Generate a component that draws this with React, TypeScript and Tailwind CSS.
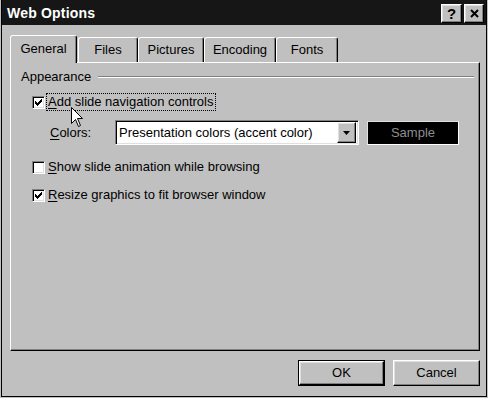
import React from "react";

const raised =
  "border-t border-l border-r border-b border-t-white border-l-white border-r-black border-b-black shadow-[inset_-1px_-1px_0_#808080,inset_1px_1px_0_#dfdfdf]";
const sunken =
  "border-t border-l border-r border-b border-t-[#808080] border-l-[#808080] border-r-white border-b-white shadow-[inset_1px_1px_0_#000,inset_-1px_-1px_0_#dfdfdf]";

function U({ c }: { c: string }) {
  return <span className="underline underline-offset-[2px] decoration-1">{c}</span>;
}

function CheckBox({ checked }: { checked: boolean }) {
  return (
    <div className={`w-[13px] h-[13px] bg-white flex items-center justify-center shrink-0 ${sunken}`}>
      {checked && (
        <svg width="7" height="7" viewBox="0 0 7 7" shapeRendering="crispEdges">
          <path
            d="M6 0h1v3h-1v1h-1v1h-1v1h-1v1h-1v-1h-1v-1h-1v-3h1v1h1v1h1v-1h1v-1h1v-1h1z"
            fill="#000"
          />
        </svg>
      )}
    </div>
  );
}

function Tab({ label, w, selected }: { label: string; w: string; selected?: boolean }) {
  return (
    <div
      className={`${w} ${
        selected ? "h-[28px] mb-[-1px] relative z-10 pb-[1px]" : "h-[25px]"
      } border-t border-l border-r border-t-white border-l-white border-r-black rounded-t-[3px] shadow-[inset_-1px_0_0_#808080] bg-[#c0c0c0] flex items-center justify-center text-[13px] leading-[16px]`}
    >
      {label}
    </div>
  );
}

export default function App() {
  return (
    <div className="w-[488px] h-[398px] bg-[#c0c0c0] px-px pb-px font-['Liberation_Sans',Arial,sans-serif] text-black">
      <div className="h-full flex flex-col border-l border-r border-b border-black">
        {/* Title bar */}
        <div className="h-[25px] bg-[#161616] flex items-center justify-between pl-[5px] pr-[2px] shrink-0">
          <span className="text-white font-bold text-[14px] leading-[16px] tracking-[0.2px]">Web Options</span>
          <div className="flex gap-[2px] mt-[2px]">
            <div className={`w-[21px] h-[19px] bg-[#c0c0c0] flex items-center justify-center font-bold text-[15px] leading-none ${raised}`}>
              ?
            </div>
            <div className={`w-[20px] h-[19px] bg-[#c0c0c0] flex items-center justify-center ${raised}`}>
              <svg width="9" height="9" viewBox="0 0 9 9">
                <path d="M1 1 L8 8 M8 1 L1 8" stroke="#000" strokeWidth="2" />
              </svg>
            </div>
          </div>
        </div>

        {/* Body */}
        <div className="flex-1 flex flex-col pt-[10px] pl-[8px] pr-[6px] pb-[10px]">
          {/* Tabs */}
          <div className="flex items-end h-[27px]">
            <Tab label="General" w="w-[67px]" selected />
            <div className="w-px" />
            <Tab label="Files" w="w-[60px]" />
            <Tab label="Pictures" w="w-[66px]" />
            <Tab label="Encoding" w="w-[72px]" />
            <Tab label="Fonts" w="w-[62px]" />
          </div>

          {/* Panel */}
          <div className="h-[289px] border-t border-l border-r border-b border-t-white border-l-white border-r-black border-b-black shadow-[inset_-1px_-1px_0_#808080] pt-[6px] pl-[10px] pr-[5px] relative">
            <div className="flex items-center gap-[7px]">
              <span className="text-[13px] leading-[16px]">Appearance</span>
              <div className="flex-1 h-[2px] border-t border-t-[#808080] border-b border-b-white" />
            </div>

            {/* Row 1 */}
            <div className="flex items-center h-[18px] mt-[8px] ml-[11px]">
              <CheckBox checked />
              <span className="ml-[1px] border border-dotted border-black px-px text-[13px] leading-[16px]">
                <U c="A" />dd slide navigation controls
              </span>
            </div>

            {/* Colors row */}
            <div className="flex items-center mt-[9px] ml-[29px]">
              <span className="w-[65px] text-[13px] leading-[16px]">
                <U c="C" />olors:
              </span>
              <div className={`w-[244px] h-[25px] bg-white flex items-center pl-[2px] pr-[2px] ${sunken}`}>
                <span className="flex-1 text-[13px] leading-[16px] pl-[1px] whitespace-nowrap">
                  Presentation colors (accent color)
                </span>
                <div className={`w-[19px] h-[21px] bg-[#c0c0c0] flex items-center justify-center ${raised}`}>
                  <svg width="7" height="4" viewBox="0 0 7 4">
                    <path d="M0 0 L7 0 L3.5 4 Z" fill="#000" />
                  </svg>
                </div>
              </div>
              <div className="ml-[8px] w-[92px] h-[24px] bg-black border-t border-l border-t-[#dfdfdf] border-l-[#dfdfdf] border-r border-b border-r-white border-b-white flex items-center justify-center text-[13px] leading-[16px] text-[#8e8e8e]">
                Sample
              </div>
            </div>

            {/* Row 3 */}
            <div className="flex items-center h-[18px] mt-[13px] ml-[11px]">
              <CheckBox checked={false} />
              <span className="ml-[1px] border border-transparent px-px text-[13px] leading-[16px]">
                <U c="S" />how slide animation while browsing
              </span>
            </div>

            {/* Row 4 */}
            <div className="flex items-center h-[18px] mt-[10px] ml-[11px]">
              <CheckBox checked />
              <span className="ml-[1px] border border-transparent px-px text-[13px] leading-[16px]">
                <U c="R" />esize graphics to fit browser window
              </span>
            </div>

            {/* Mouse cursor */}
            <svg
              className="absolute left-[60px] top-[44px]"
              width="13"
              height="21"
              viewBox="0 0 13 21"
            >
              <path
                d="M0.5 0.5 L0.5 16.5 L4.5 12.5 L7.5 19.5 L9.5 18.5 L6.5 11.5 L11.5 11.5 Z"
                fill="#fff"
                stroke="#000"
                strokeWidth="1"
              />
            </svg>
          </div>

          {/* Buttons */}
          <div className="flex justify-end gap-[8px] mt-[9px]">
            <div className="w-[87px] h-[26px] border border-black">
              <div className={`w-full h-full flex items-center justify-center text-[13px] leading-[16px] ${raised}`}>OK</div>
            </div>
            <div className={`w-[87px] h-[26px] flex items-center justify-center text-[13px] leading-[16px] ${raised}`}>
              Cancel
            </div>
          </div>
        </div>
      </div>
    </div>
  );
}
